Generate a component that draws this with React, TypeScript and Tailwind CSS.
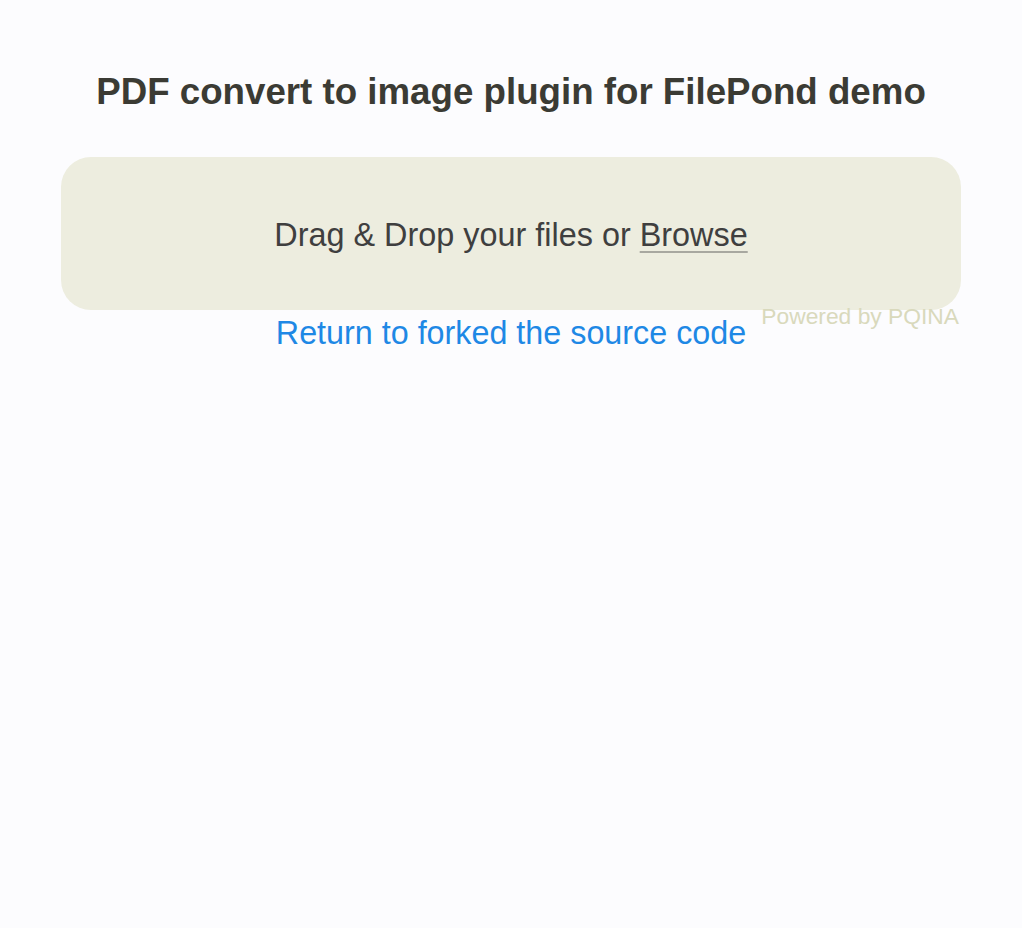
export default function App() {
  return (
    <div
      className="min-h-[928px] w-full bg-[#fcfcfe]"
      style={{ fontFamily: '"Liberation Sans", Arial, sans-serif' }}
    >
      <div className="mx-auto w-[900px] pt-[74px]">
        <h1 className="text-center text-[36.7px] font-bold leading-none text-[#3b3b34]">
          PDF convert to image plugin for FilePond demo
        </h1>
        <div className="relative mt-[46px]">
          <div className="flex h-[153px] items-center justify-center rounded-[30px] bg-[#ededdf] pt-[3px]">
            <span className="text-[32.4px] leading-none text-[#3f3f3f]">
              Drag &amp; Drop your files or{" "}
              <span className="underline decoration-[#a8a8a0] decoration-2 underline-offset-[5px]">
                Browse
              </span>
            </span>
          </div>
          <div className="absolute right-[2px] top-[148px] text-[22.8px] leading-none text-[#d9d9bc]">
            Powered by PQINA
          </div>
        </div>
        <div className="mt-[3px] text-center">
          <a href="#" className="text-[32.3px] leading-[40px] text-[#1e88e5]">
            Return to forked the source code
          </a>
        </div>
      </div>
    </div>
  );
}
